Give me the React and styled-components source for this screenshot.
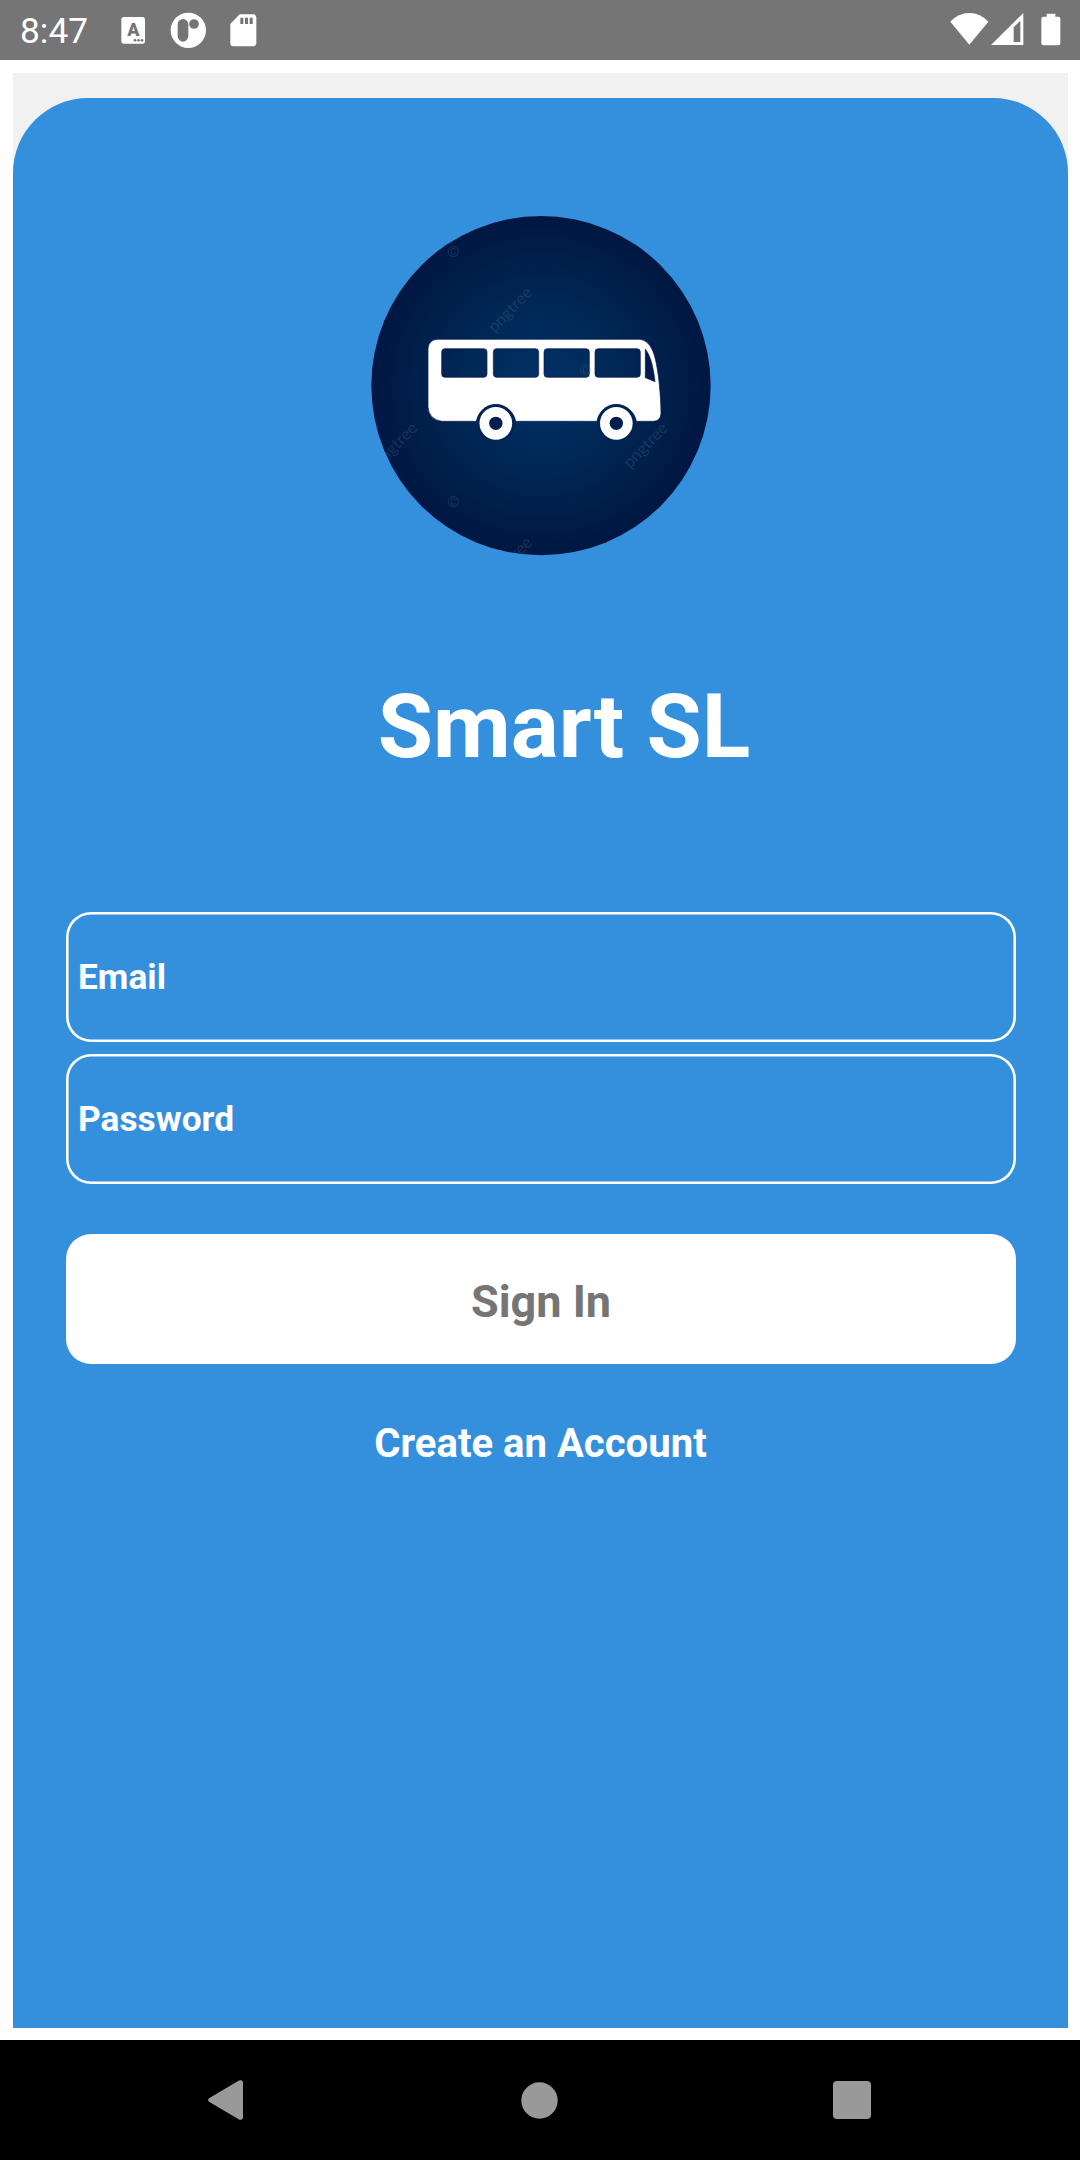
import React from "react";
import styled, { createGlobalStyle } from "styled-components";

const GlobalStyle = createGlobalStyle`
  * { box-sizing: border-box; }
  body { margin: 0; background: #fff; font-family: Roboto, "Noto Sans", sans-serif; }
`;

const Screen = styled.div`
  display: flex;
  flex-direction: column;
  width: 1080px;
  height: 2160px;
  overflow: hidden;
  background: #fff;
`;

const StatusBar = styled.header`
  display: flex;
  align-items: flex-start;
  height: 60px;
  flex: none;
  background: #757575;
  color: #fff;
`;

const Clock = styled.span`
  width: 101px;
  padding-left: 20px;
  font-size: 35.3px;
  font-weight: 370;
  line-height: 62px;
`;

const Glyph = styled.svg`
  display: block;
  flex: none;
  margin-left: ${(p) => p.$gap || 0}px;
  fill: #fff;
`;

const Spacer = styled.div`
  flex: 1;
`;

const Content = styled.main`
  display: flex;
  flex: 1;
  padding: 13px 12px 12px 13px;
`;

const Backdrop = styled.div`
  display: flex;
  flex: 1;
  padding-top: 25px;
  background: #f1f1f1;
`;

const Card = styled.section`
  display: flex;
  flex-direction: column;
  align-items: center;
  flex: 1;
  padding: 118px 52px 0 53px;
  border-radius: 75px 75px 0 0;
  background: #3490dd;
  color: #fff;
`;

const Logo = styled.svg`
  display: block;
  flex: none;
  width: 340px;
  height: 340px;
`;

const Title = styled.h1`
  margin: 111px 0 0 46px;
  font-size: 89.7px;
  font-weight: 700;
  line-height: 120px;
`;

const Form = styled.form`
  display: flex;
  flex-direction: column;
  align-self: stretch;
  gap: 12px;
  margin-top: 125px;
`;

const Input = styled.input`
  width: 100%;
  height: 130px;
  padding: 0 12px 1px;
  border: 0;
  outline: 0;
  border-radius: 25px;
  background: transparent;
  box-shadow: inset 0 0 0 2.6px #fff;
  color: #fff;
  font: 700 35.3px Roboto, sans-serif;
  &::placeholder { color: #fff; opacity: 1; }
`;

const SignIn = styled.button`
  height: 130px;
  margin-top: 38px;
  padding: 5px 0 0;
  border: 0;
  border-radius: 25px;
  background: #fff;
  color: #757575;
  font: 700 45px Roboto, sans-serif;
`;

const CreateLink = styled.a`
  margin: 55px 0 0 -1px;
  font-size: 40.1px;
  font-weight: 700;
  line-height: 50px;
`;

const NavBar = styled.nav`
  display: flex;
  align-items: center;
  justify-content: space-between;
  height: 120px;
  flex: none;
  padding: 0 209px 0 208px;
  background: #000;
  svg { fill: #999; }
`;

const Mark = ({ x, y, children }) => (
  <text transform={`translate(${x} ${y}) rotate(-46)`} fontSize="49" fontFamily="Lato, sans-serif" fill="#5b6a8c" fillOpacity="0.3">
    {children}
  </text>
);

const Copy = ({ x, y }) => (
  <text x={x} y={y + 16} textAnchor="middle" fontSize="46" fontFamily="Roboto, sans-serif" fill="#5b6a8c" fillOpacity="0.3">©</text>
);

function BusLogo() {
  return (
    <Logo viewBox="33 48 1020 1020" aria-label="Bus">
      <defs>
        <radialGradient id="night" gradientUnits="userSpaceOnUse" cx="543" cy="555" r="509">
          <stop offset="0" stopColor="#003367" />
          <stop offset="0.5" stopColor="#002754" />
          <stop offset="1" stopColor="#001742" />
        </radialGradient>
        <clipPath id="disc"><circle cx="543" cy="557" r="509" /></clipPath>
      </defs>
      <circle cx="543" cy="557" r="509" fill="url(#night)" />
      <g clipPath="url(#disc)">
        <Mark x={404} y={400}>pngtree</Mark>
        <Mark x={59} y={807}>pngtree</Mark>
        <Mark x={810} y={807}>pngtree</Mark>
        <Mark x={404} y={1150}>pngtree</Mark>
        <Copy x={280} y={156} />
        <Copy x={280} y={906} />
      </g>
      <path
        d="M232 418H838C864 420 878 444 886 477C896 520 902 580 903 640Q902 663 880 664H829A60 60 0 0 0 711 664H467A60 60 0 0 0 349 664H246Q206 658 204 620V446Q206 420 232 418Z"
        fill="#fff" stroke="#081a55" strokeWidth="2"
      />
      {[245, 400, 552, 705].map((x) => (
        <rect key={x} x={x} y="446" width="136" height="86" rx="10" fill="url(#night)" stroke="#101a55" strokeWidth="2" />
      ))}
      <path d="M856 447C874 470 881 510 885 545L856 533Z" fill="#001b49" stroke="#101a55" strokeWidth="2" />
      {[407.5, 769].map((x) => (
        <g key={x}>
          <circle cx={x} cy="670" r="58" fill="#002453" />
          <circle cx={x} cy="670" r="49" fill="#fff" />
          <circle cx={x} cy="670" r="20" fill="#001e50" />
        </g>
      ))}
      <Copy x={676} y={508} />
    </Logo>
  );
}

export default function App() {
  return (
    <Screen>
      <GlobalStyle />
      <StatusBar>
        <Clock>8:47</Clock>
        <Glyph $gap={20} width="26" height="60" viewBox="363 0 78 180">
          <rect x="364" y="51" width="71" height="80" rx="8" />
          <text x="400" y="109" textAnchor="middle" fontSize="54" fontWeight="900" fontFamily="Roboto, sans-serif" fill="#757575">A</text>
          <g fill="#757575">
            <circle cx="405" cy="121" r="4" />
            <circle cx="415.500" cy="121" r="4" />
            <circle cx="426" cy="121" r="4" />
          </g>
        </Glyph>
        <Glyph $gap={23} width="36" height="60" viewBox="510 0 108 180">
          <circle cx="565" cy="91" r="53" />
          <rect x="533" y="57" width="32" height="68" rx="16" fill="#757575" />
          <circle cx="582" cy="72" r="14.500" fill="#757575" />
        </Glyph>
        <Glyph $gap={24} width="26" height="60" viewBox="690 0 78 180" overflow="visible">
          <path d="M719 43H760Q769 43 769 52V130Q769 139 760 139H700Q691 139 691 130V72Z" />
          <path d="M721 53h9v19h-9zM735 53h9v19h-9zM749 53h9v19h-9z" fill="#757575" />
        </Glyph>
        <Spacer />
        <Glyph width="39" height="60" viewBox="149 0 117 180">
          <path d="M150 65Q174 39 207 39T264 65L207 134Z" />
        </Glyph>
        <Glyph $gap={2} width="33" height="60" viewBox="272 0 99 180">
          <path fillRule="evenodd" d="M369 39V135H272ZM360 62L340 82V126H360Z" />
        </Glyph>
        <Glyph $gap={17} width="20" height="60" viewBox="422 0 60 180">
          <path d="M439 41H465V50H474Q480 50 480 56V130Q480 136 474 136H429Q423 136 423 130V56Q423 50 429 50H439Z" />
        </Glyph>
        <Glyph width="19" height="60" />
      </StatusBar>
      <Content>
        <Backdrop>
          <Card>
            <BusLogo />
            <Title>Smart SL</Title>
            <Form onSubmit={(e) => e.preventDefault()}>
              <Input type="email" placeholder="Email" aria-label="Email" />
              <Input type="password" placeholder="Password" aria-label="Password" />
              <SignIn type="submit">Sign In</SignIn>
            </Form>
            <CreateLink>Create an Account</CreateLink>
          </Card>
        </Backdrop>
      </Content>
      <NavBar>
        <svg width="38" height="40" viewBox="0 0 38 40"><path d="M1 18.300L31 .6Q35-.6 35 3V37Q35 40.600 31 39.400L1 21.700Q-.8 20 1 18.300Z" /></svg>
        <svg width="37" height="37" viewBox="0 0 37 37"><circle cx="18.500" cy="18.500" r="18.200" /></svg>
        <svg width="38" height="38" viewBox="0 0 38 38"><rect width="38" height="38" rx="4" /></svg>
      </NavBar>
    </Screen>
  );
}
